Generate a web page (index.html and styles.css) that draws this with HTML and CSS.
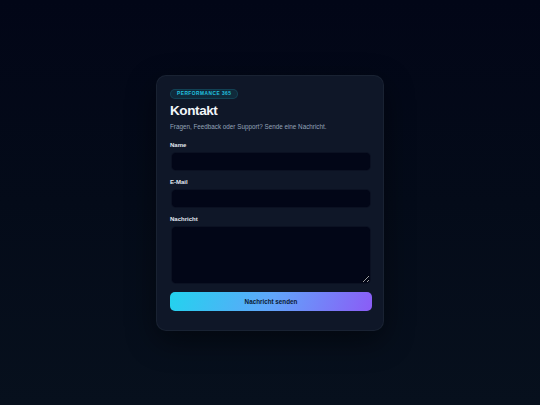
FILE: index.html
```html
<!DOCTYPE html>
<html lang="de">
<head>
<meta charset="utf-8">
<title>Kontakt – Performance 365</title>
<link rel="stylesheet" href="styles.css">
</head>
<body>
<main class="page">
  <section class="card">
    <span class="badge">PERFORMANCE 365</span>
    <h1 class="title">Kontakt</h1>
    <p class="subtitle">Fragen, Feedback oder Support? Sende eine Nachricht.</p>
    <form class="form">
      <div class="field">
        <label class="label" for="name">Name</label>
        <input class="input" id="name" type="text">
      </div>
      <div class="field">
        <label class="label" for="email">E-Mail</label>
        <input class="input" id="email" type="email">
      </div>
      <div class="field">
        <label class="label" for="msg">Nachricht</label>
        <textarea class="input textarea" id="msg"></textarea>
      </div>
      <button class="submit" type="button">Nachricht senden</button>
    </form>
  </section>
</main>
</body>
</html>
```

FILE: styles.css
```css
* { box-sizing: border-box; }
html, body { margin: 0; height: 100%; }
body {
  font-family: "Liberation Sans", Arial, sans-serif;
  background: linear-gradient(180deg, #020617 0%, #040b19 50%, #07101d 100%);
  color: #e2e8f0;
}
.page {
  height: 405px;
  display: flex;
  align-items: center;
  justify-content: center;
}
.card {
  width: 228px;
  height: 256px;
  padding: 13px 13px 19px;
  border-radius: 10px;
  background: #0f1728;
  border: 1px solid rgba(148, 163, 184, 0.08);
  box-shadow: 0 10px 30px rgba(0, 0, 0, 0.45);
  display: flex;
  flex-direction: column;
  align-items: flex-start;
}
.badge {
  display: inline-flex;
  align-items: center;
  height: 13px;
  padding: 0 6px;
  border-radius: 7px;
  background: rgba(34, 211, 238, 0.1);
  border: 1px solid rgba(34, 211, 238, 0.14);
  color: #22c5e0;
  font-size: 4.8px;
  font-weight: 700;
  letter-spacing: 0.5px;
}
.title {
  margin: 4px 0 0;
  font-size: 13.5px;
  line-height: 16px;
  font-weight: 700;
  letter-spacing: -0.4px;
  color: #f1f5f9;
}
.subtitle {
  margin: 4px 0 0;
  font-size: 6.3px;
  line-height: 8px;
  color: #94a3b8;
}
.form {
  margin-top: 10px;
  width: 100%;
  display: flex;
  flex-direction: column;
  gap: 7px;
}
.field {
  display: flex;
  flex-direction: column;
  gap: 3px;
}
.label {
  font-size: 6px;
  line-height: 8px;
  font-weight: 700;
  color: #e2e8f0;
}
.input {
  width: 200px;
  margin-left: 1px;
  height: 19px;
  border-radius: 5px;
  border: 1px solid rgba(148, 163, 184, 0.07);
  background: #020617;
  color: #e2e8f0;
  font: inherit;
  outline: none;
}
.textarea {
  height: 58px;
  resize: vertical;
  color-scheme: dark;
}
.submit {
  margin-top: 1px;
  width: 202px;
  height: 19px;
  border: 0;
  border-radius: 5px;
  background: linear-gradient(110deg, #22d3ee 0%, #60a5fa 50%, #8b5cf6 100%);
  color: #0b1a33;
  font-family: "Liberation Sans", Arial, sans-serif;
  font-size: 6.3px;
  font-weight: 700;
  cursor: pointer;
}
```
